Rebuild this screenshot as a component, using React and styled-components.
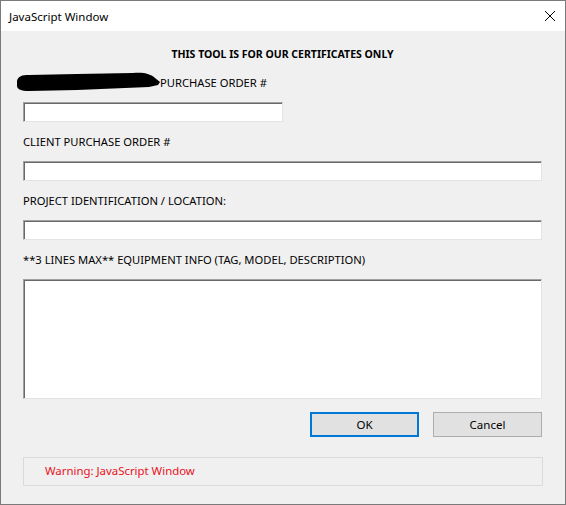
import React from 'react'
import styled, { createGlobalStyle } from 'styled-components'

const GlobalStyle = createGlobalStyle`
  html, body {
    margin: 0;
    padding: 0;
    background: #f0f0f0;
  }
  * {
    box-sizing: border-box;
  }
`

const fields = [
  { label: 'CLIENT PURCHASE ORDER #' },
  { label: 'PROJECT IDENTIFICATION / LOCATION:' },
]

export default function App() {
  return (
    <Frame>
      <GlobalStyle />
      <TitleBar>
        <Caption>JavaScript Window</Caption>
        <CloseButton aria-label="Close">
          <svg width="12" height="12" viewBox="0 0 12 12">
            <path d="M1 1 L11 11 M11 1 L1 11" stroke="#000" strokeWidth="1" fill="none" />
          </svg>
        </CloseButton>
      </TitleBar>
      <Body>
        <Heading>THIS TOOL IS FOR OUR CERTIFICATES ONLY</Heading>

        <Label>
          {/* redacted company name */}
          <Redacted width="144" height="20" viewBox="0 0 144 20">
            <path
              d="M0 9 C1 4, 5 3, 12 3 L60 2 L116 1 C127 0, 134 2, 138 6 L143 10 L141 13 L132 15 L60 18 L12 19 C4 19, 0 17, 0 14 Z"
              fill="#000"
            />
          </Redacted>
          PURCHASE ORDER #
        </Label>
        <TextInput $width="260px" />

        {fields.map((f) => (
          <React.Fragment key={f.label}>
            <Label>{f.label}</Label>
            <TextInput />
          </React.Fragment>
        ))}

        <Label>**3 LINES MAX** EQUIPMENT INFO (TAG, MODEL, DESCRIPTION)</Label>
        <TextArea />

        <ButtonRow>
          <Button $primary>OK</Button>
          <Button>Cancel</Button>
        </ButtonRow>

        <Warning>Warning: JavaScript Window</Warning>
      </Body>
    </Frame>
  )
}

const Frame = styled.div`
  width: 566px;
  height: 505px;
  border: 1px solid #7a7a7a;
  background: #f0f0f0;
  display: flex;
  flex-direction: column;
  font-family: "Noto Sans", "Liberation Sans", sans-serif;
  font-size: 12px;
  color: #000;
`

const TitleBar = styled.div`
  height: 30px;
  background: #fff;
  display: flex;
  align-items: center;
  justify-content: space-between;
  padding: 0 9px 0 8px;
`

const Caption = styled.span`
  font-size: 11.5px;
  line-height: 15px;
`

const CloseButton = styled.span`
  display: flex;
  width: 12px;
  height: 12px;
`

const Body = styled.div`
  flex: 1;
  padding: 16px 23px 0 22px;
  display: flex;
  flex-direction: column;
`

const Heading = styled.div`
  text-align: center;
  font-weight: 700;
  font-size: 10.5px;
  line-height: 15px;
  margin-bottom: 13px;
`

const Label = styled.div`
  font-size: 11.2px;
  line-height: 15px;
  height: 15px;
  margin-bottom: 12px;
  white-space: nowrap;
  display: flex;
  align-items: center;
`

const Redacted = styled.svg`
  flex: none;
  margin: -1px -1px 0 -6px;
`

const sunken = `
  background: #fff;
  border-style: solid;
  border-width: 1px;
  border-color: #a0a0a0 #e3e3e3 #e3e3e3 #a0a0a0;
  box-shadow: inset 1px 1px 0 #696969;
`

const TextInput = styled.div`
  ${sunken}
  width: ${(p) => p.$width || '100%'};
  height: 20px;
  margin-bottom: 12px;
`

const TextArea = styled.div`
  ${sunken}
  width: 100%;
  height: 120px;
`

const ButtonRow = styled.div`
  display: flex;
  justify-content: flex-end;
  gap: 14px;
  margin-top: 13px;
`

const Button = styled.div`
  width: 109px;
  height: 25px;
  display: flex;
  align-items: center;
  justify-content: center;
  background: #e1e1e1;
  border: ${(p) => (p.$primary ? '2px solid #0078d7' : '1px solid #adadad')};
  font-size: 11.5px;
`

const Warning = styled.div`
  margin-top: 20px;
  height: 29px;
  width: calc(100% + 1px);
  border: 1px solid #dadada;
  display: flex;
  align-items: center;
  padding: 0 0 3px 21px;
  color: #e81123;
  font-size: 11.4px;
`
